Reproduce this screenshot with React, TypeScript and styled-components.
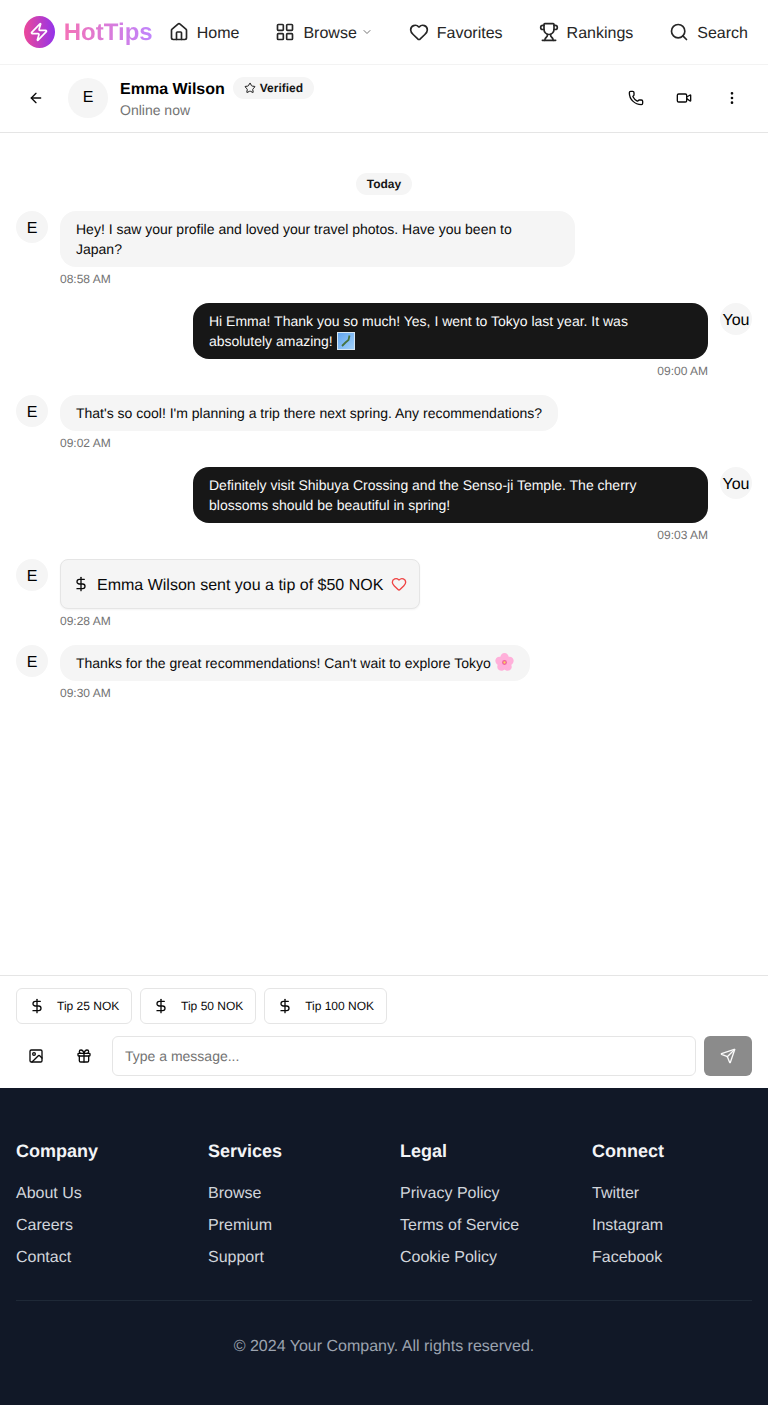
import React from 'react';
import styled, { createGlobalStyle } from 'styled-components';
import {
  ArrowLeft,
  ChevronDown,
  DollarSign,
  EllipsisVertical,
  Gift,
  Heart,
  House,
  Image as ImageIcon,
  LayoutGrid,
  Phone,
  Search,
  Send,
  Star,
  Trophy,
  Video,
  Zap,
} from 'lucide-react';

const GlobalStyle = createGlobalStyle`
  * { box-sizing: border-box; }
  body {
    margin: 0;
    background: #fff;
    color: #000;
    font-family: "Liberation Sans", Arial, sans-serif;
    text-rendering: geometricPrecision;
  }
`;

const Page = styled.div`
  display: flex;
  flex-direction: column;
  width: 768px;
  height: 1405px;
`;

const Nav = styled.nav`
  display: flex;
  align-items: center;
  height: 65px;
  padding: 0 20px 0 24px;
  border-bottom: 1px solid #f3f3f3;
`;

const LogoMark = styled.div`
  display: flex;
  align-items: center;
  justify-content: center;
  width: 32px;
  height: 32px;
  border-radius: 50%;
  color: #fff;
  background: linear-gradient(90deg, #ec4899, #9333ea);
`;

const LogoText = styled.span`
  width: 89px;
  margin-left: 8px;
  padding: 2px 0 0 1px;
  font-size: 24px;
  line-height: 32px;
  font-weight: 700;
  color: transparent;
  background: linear-gradient(90deg, #f472b6, #c084fc);
  -webkit-background-clip: text;
  background-clip: text;
`;

const NavList = styled.div`
  display: flex;
  align-items: center;
  gap: 36px;
  margin-left: 17px;
`;

const NavItem = styled.a`
  display: flex;
  align-items: center;
  gap: 8px;
  font-size: 16px;
  line-height: 24px;
  color: #262626;
`;

const NavLabel = styled.span`
  padding-top: 3px;
`;

const Caret = styled(ChevronDown)`
  margin-left: -4px;
  color: #737373;
`;

const ChatHeader = styled.header`
  display: flex;
  align-items: center;
  height: 68px;
  padding: 0 16px 1px;
  border-bottom: 1px solid #e5e5e5;
`;

const IconButton = styled.button`
  display: flex;
  align-items: center;
  justify-content: center;
  flex-shrink: 0;
  width: 40px;
  height: 40px;
  padding: 0;
  border: 0;
  background: none;
  color: #0a0a0a;
`;

const HeaderAvatar = styled.div`
  display: flex;
  align-items: center;
  justify-content: center;
  width: 40px;
  height: 40px;
  margin-left: 12px;
  border-radius: 50%;
  background: #f5f5f5;
  font-size: 16px;
`;

const HeaderInfo = styled.div`
  display: flex;
  flex-direction: column;
  flex: 1;
  margin-left: 12px;
`;

const NameRow = styled.div`
  display: flex;
  align-items: center;
  gap: 8px;
`;

const Name = styled.span`
  font-size: 16px;
  line-height: 28px;
  font-weight: 700;
`;

const VerifiedBadge = styled.span`
  display: flex;
  align-items: center;
  gap: 4px;
  height: 22px;
  margin-top: -5px;
  padding: 0 11px;
  border-radius: 11px;
  background: #f5f5f5;
  font-size: 12px;
  font-weight: 700;
  color: #171717;
`;

const Status = styled.span`
  margin-top: -4px;
  font-size: 14px;
  line-height: 20px;
  color: #737373;
`;

const HeaderActions = styled.div`
  display: flex;
  gap: 8px;
`;

const Messages = styled.main`
  display: flex;
  flex-direction: column;
  flex: 1;
  gap: 16px;
  padding: 40px 16px 0;
`;

const DateRow = styled.div`
  display: flex;
  justify-content: center;
`;

const DateChip = styled.span`
  height: 22px;
  padding: 0 11px;
  border-radius: 11px;
  background: #f5f5f5;
  font-size: 12px;
  font-weight: 700;
  line-height: 22px;
  color: #171717;
`;

const Row = styled.div<{ $mine?: boolean }>`
  display: flex;
  flex-direction: ${(p) => (p.$mine ? 'row-reverse' : 'row')};
  gap: 12px;
`;

const Avatar = styled.div`
  flex-shrink: 0;
  width: 32px;
  height: 32px;
  border-radius: 50%;
  background: #f5f5f5;
  font-size: 16px;
  line-height: 35px;
  text-align: center;
`;

const Column = styled.div<{ $mine?: boolean }>`
  display: flex;
  flex-direction: column;
  align-items: ${(p) => (p.$mine ? 'flex-end' : 'flex-start')};
  gap: 4px;
`;

const Bubble = styled.div<{ $mine?: boolean }>`
  width: ${(p) => (p.$mine ? '515px' : 'auto')};
  max-width: 515px;
  padding: 8px 16px;
  border-radius: 16px;
  background: ${(p) => (p.$mine ? '#171717' : '#f5f5f5')};
  color: ${(p) => (p.$mine ? '#fafafa' : '#0a0a0a')};
  font-size: 14px;
  line-height: 20px;
`;

const TipCard = styled.div`
  display: flex;
  align-items: center;
  gap: 8px;
  height: 50px;
  padding: 0 12px;
  border: 1px solid #e5e5e5;
  border-radius: 8px;
  background: #f5f5f5;
  box-shadow: 0 1px 2px rgba(0, 0, 0, 0.05);
  font-size: 16px;
  color: #0a0a0a;
`;

const TipText = styled.span`
  padding-top: 4px;
`;

const Time = styled.span`
  font-size: 12px;
  line-height: 16px;
  color: #737373;
`;

const Emoji = styled.svg<{ $size: number }>`
  display: inline-block;
  width: ${(p) => p.$size}px;
  height: ${(p) => p.$size}px;
  margin: -4px 0;
  vertical-align: 0;
`;

const Composer = styled.section`
  display: flex;
  flex-direction: column;
  gap: 12px;
  height: 113px;
  padding: 12px 16px;
  border-top: 1px solid #e5e5e5;
`;

const TipRow = styled.div`
  display: flex;
  gap: 8px;
`;

const TipButton = styled.button`
  display: flex;
  align-items: center;
  gap: 12px;
  height: 36px;
  padding: 0 11.8px 0 12px;
  border: 1px solid #e5e5e5;
  border-radius: 6px;
  background: #fff;
  font-family: inherit;
  font-size: 12px;
  text-rendering: geometricPrecision;
  color: #0a0a0a;
`;

const InputRow = styled.div`
  display: flex;
  align-items: center;
  gap: 8px;
`;

const MessageInput = styled.input`
  flex: 1;
  min-width: 0;
  height: 40px;
  padding: 0 12px;
  border: 1px solid #e5e5e5;
  border-radius: 6px;
  font-family: inherit;
  font-size: 14px;
  text-rendering: geometricPrecision;
  &::placeholder {
    color: #737373;
    opacity: 1;
  }
`;

const SendButton = styled.button`
  display: flex;
  align-items: center;
  justify-content: center;
  width: 48px;
  height: 40px;
  padding: 0;
  border: 0;
  border-radius: 6px;
  background: #8b8b8b;
  color: #fafafa;
`;

const Footer = styled.footer`
  height: 317px;
  padding: 49px 16px 0;
  background: #111827;
`;

const FooterGrid = styled.div`
  display: grid;
  grid-template-columns: repeat(4, 1fr);
  gap: 32px;
  padding-bottom: 30px;
  border-bottom: 1px solid #1f2937;
`;

const FooterTitle = styled.h3`
  margin: 0 0 17px;
  font-size: 18px;
  line-height: 28px;
  font-weight: 700;
  color: #f3f4f6;
`;

const FooterLinks = styled.ul`
  display: flex;
  flex-direction: column;
  gap: 8px;
  margin: 0;
  padding: 0;
  list-style: none;
`;

const FooterLink = styled.li`
  font-size: 16px;
  line-height: 24px;
  color: #d1d5db;
`;

const Copyright = styled.p`
  margin: 34px 0 0;
  font-size: 16px;
  line-height: 24px;
  text-align: center;
  color: #9ca3af;
`;

const navItems = [
  { label: 'Home', icon: House },
  { label: 'Browse', icon: LayoutGrid, caret: true },
  { label: 'Favorites', icon: Heart },
  { label: 'Rankings', icon: Trophy },
  { label: 'Search', icon: Search },
];

const footerColumns = [
  { title: 'Company', links: ['About Us', 'Careers', 'Contact'] },
  { title: 'Services', links: ['Browse', 'Premium', 'Support'] },
  { title: 'Legal', links: ['Privacy Policy', 'Terms of Service', 'Cookie Policy'] },
  { title: 'Connect', links: ['Twitter', 'Instagram', 'Facebook'] },
];

const JapanMap = () => (
  <Emoji $size={18} viewBox="0 0 18 18" role="img" aria-label="map of Japan">
    <defs>
      <linearGradient id="sea" x1="0" y1="0" x2="1" y2="1">
        <stop offset="0" stopColor="#5fa3ee" />
        <stop offset="1" stopColor="#a3d2fa" />
      </linearGradient>
    </defs>
    <rect x="0.5" y="0.5" width="17" height="17" fill="url(#sea)" stroke="#d6e6f2" />
    <path d="M12.5 3.5 L11.5 8 L8.5 10.5 L5 14" fill="none" stroke="#47733f" strokeWidth="1.8" />
  </Emoji>
);

const Blossom = () => (
  <Emoji $size={19} viewBox="0 0 18 18" role="img" aria-label="cherry blossom">
    {[0, 72, 144, 216, 288].map((angle) => (
      <ellipse key={angle} cx="9" cy="4.6" rx="4.1" ry="4.5" fill="#ffb0da" transform={`rotate(${angle} 9 9)`} />
    ))}
    <circle cx="9" cy="9" r="2.3" fill="#f0609f" />
    <circle cx="9" cy="9" r="1.1" fill="#f8d85c" />
  </Emoji>
);

function Incoming({ time, children }: { time: string; children: React.ReactNode }) {
  return (
    <Row>
      <Avatar>E</Avatar>
      <Column>
        {children}
        <Time>{time}</Time>
      </Column>
    </Row>
  );
}

function Outgoing({ time, children }: { time: string; children: React.ReactNode }) {
  return (
    <Row $mine>
      <Avatar>You</Avatar>
      <Column $mine>
        <Bubble $mine>{children}</Bubble>
        <Time>{time}</Time>
      </Column>
    </Row>
  );
}

export default function App() {
  return (
    <Page>
      <GlobalStyle />
      <Nav>
        <LogoMark>
          <Zap size={20} strokeWidth={2} />
        </LogoMark>
        <LogoText>HotTips</LogoText>
        <NavList>
          {navItems.map(({ label, icon: Icon, caret }) => (
            <NavItem key={label}>
              <Icon size={20} strokeWidth={2} />
              <NavLabel>{label}</NavLabel>
              {caret && <Caret size={12} />}
            </NavItem>
          ))}
        </NavList>
      </Nav>

      <ChatHeader>
        <IconButton>
          <ArrowLeft size={16} />
        </IconButton>
        <HeaderAvatar>E</HeaderAvatar>
        <HeaderInfo>
          <NameRow>
            <Name>Emma Wilson</Name>
            <VerifiedBadge>
              <Star size={12} />
              Verified
            </VerifiedBadge>
          </NameRow>
          <Status>Online now</Status>
        </HeaderInfo>
        <HeaderActions>
          <IconButton>
            <Phone size={16} />
          </IconButton>
          <IconButton>
            <Video size={16} />
          </IconButton>
          <IconButton>
            <EllipsisVertical size={16} />
          </IconButton>
        </HeaderActions>
      </ChatHeader>

      <Messages>
        <DateRow>
          <DateChip>Today</DateChip>
        </DateRow>
        <Incoming time="08:58 AM">
          <Bubble>Hey! I saw your profile and loved your travel photos. Have you been to Japan?</Bubble>
        </Incoming>
        <Outgoing time="09:00 AM">
          Hi Emma! Thank you so much! Yes, I went to Tokyo last year. It was absolutely amazing! <JapanMap />
        </Outgoing>
        <Incoming time="09:02 AM">
          <Bubble>That's so cool! I'm planning a trip there next spring. Any recommendations?</Bubble>
        </Incoming>
        <Outgoing time="09:03 AM">
          Definitely visit Shibuya Crossing and the Senso-ji Temple. The cherry blossoms should be beautiful in spring!
        </Outgoing>
        <Incoming time="09:28 AM">
          <TipCard>
            <DollarSign size={16} />
            <TipText>Emma Wilson sent you a tip of $50 NOK</TipText>
            <Heart size={16} color="#ef4444" />
          </TipCard>
        </Incoming>
        <Incoming time="09:30 AM">
          <Bubble>
            Thanks for the great recommendations! Can't wait to explore Tokyo <Blossom />
          </Bubble>
        </Incoming>
      </Messages>

      <Composer>
        <TipRow>
          {[25, 50, 100].map((amount) => (
            <TipButton key={amount}>
              <DollarSign size={16} />
              Tip {amount} NOK
            </TipButton>
          ))}
        </TipRow>
        <InputRow>
          <IconButton>
            <ImageIcon size={16} />
          </IconButton>
          <IconButton>
            <Gift size={16} />
          </IconButton>
          <MessageInput placeholder="Type a message..." />
          <SendButton>
            <Send size={16} />
          </SendButton>
        </InputRow>
      </Composer>

      <Footer>
        <FooterGrid>
          {footerColumns.map((col) => (
            <div key={col.title}>
              <FooterTitle>{col.title}</FooterTitle>
              <FooterLinks>
                {col.links.map((link) => (
                  <FooterLink key={link}>{link}</FooterLink>
                ))}
              </FooterLinks>
            </div>
          ))}
        </FooterGrid>
        <Copyright>© 2024 Your Company. All rights reserved.</Copyright>
      </Footer>
    </Page>
  );
}
